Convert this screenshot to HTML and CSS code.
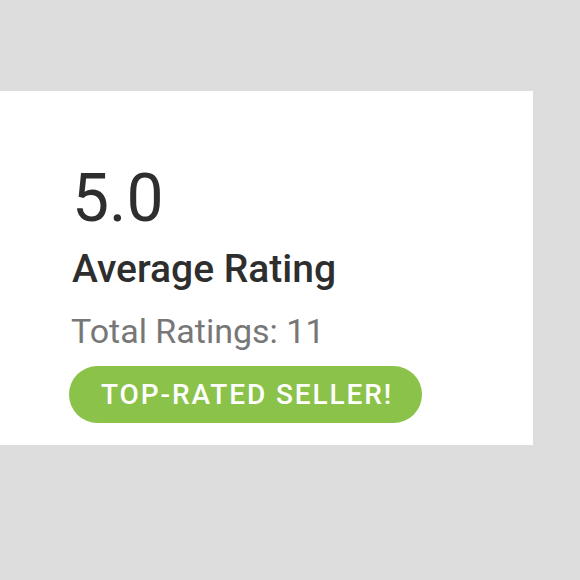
FILE: index.html
```html
<!DOCTYPE html>
<html lang="en">
<head>
<meta charset="utf-8">
<title>Rating</title>
<link rel="stylesheet" href="styles.css">
</head>
<body>
<div class="page">
  <section class="card">
    <div class="score">5.0</div>
    <div class="title">Average Rating</div>
    <div class="total">Total Ratings: 11</div>
    <div class="badge">TOP-RATED SELLER!</div>
  </section>
</div>
</body>
</html>
```
FILE: styles.css
```css
html, body {
  margin: 0;
  padding: 0;
}
body {
  background: #dddddd;
  font-family: Roboto, "Liberation Sans", Arial, sans-serif;
  width: 580px;
  height: 580px;
  overflow: hidden;
}
.page {
  padding-top: 91px;
}
.card {
  width: 533px;
  height: 354px;
  box-sizing: border-box;
  background: #ffffff;
  padding: 75px 0 0 69px;
  display: flex;
  flex-direction: column;
  align-items: flex-start;
}
.score {
  padding-left: 3px;
  font-size: 66px;
  line-height: 66px;
  color: #2e2e2e;
}
.title {
  padding-left: 3px;
  margin-top: 14px;
  font-size: 39px;
  line-height: 46px;
  font-weight: 500;
  color: #2e2e2e;
}
.total {
  padding-left: 2px;
  margin-top: 19px;
  font-size: 34px;
  line-height: 41px;
  color: #777777;
}
.badge {
  margin-top: 14px;
  height: 57px;
  line-height: 57px;
  padding: 0 29px 0 32px;
  border-radius: 29px;
  background: #8bc34a;
  color: #ffffff;
  font-size: 28px;
  font-weight: 500;
  letter-spacing: 1.9px;
}
```
